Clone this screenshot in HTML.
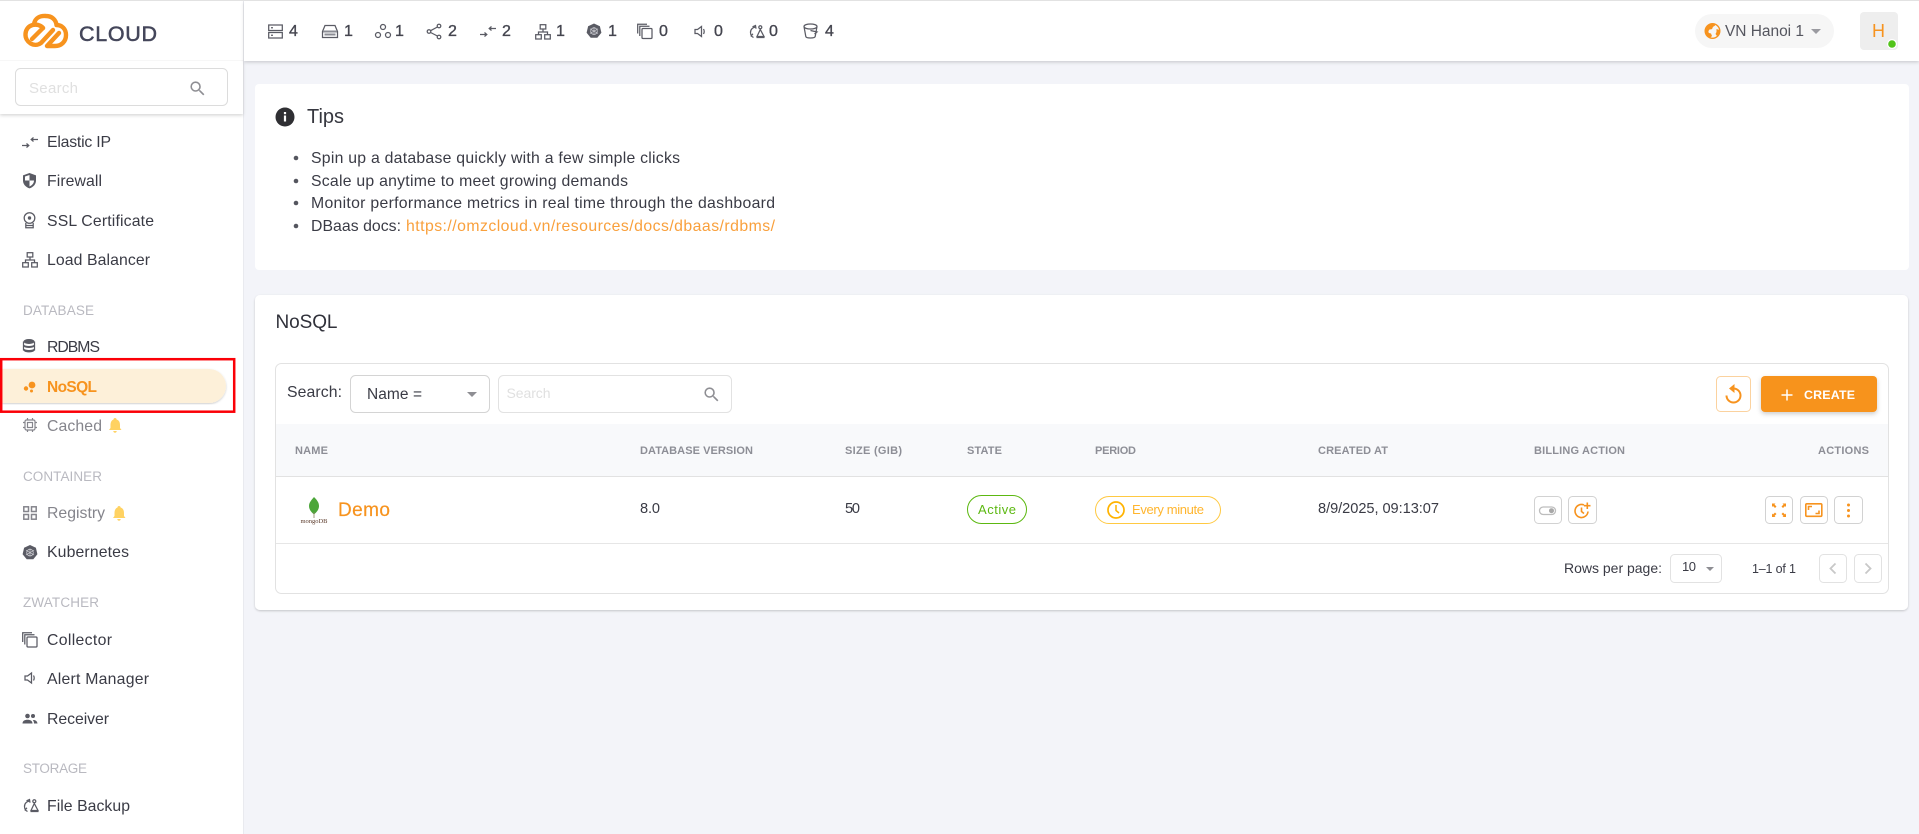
<!DOCTYPE html>
<html><head><meta charset="utf-8"><title>NoSQL</title>
<style>
html,body{margin:0;padding:0;width:1919px;height:834px;overflow:hidden;background:#f3f4f9}
svg{display:block}
text{font-family:"Liberation Sans",sans-serif;white-space:pre}
.n{font-size:15.8px;fill:#3a3b45}
.d{font-size:15.8px;fill:#85858c}
.s{font-size:13.5px;fill:#b9b9c0}
.c{font-size:16px;fill:#44454f;stroke:#44454f;stroke-width:.35}
.t{font-size:15.8px;fill:#3a3b45}
.td{font-size:14.6px;fill:#3a3b45}
.o{fill:#f7931e}
.h{font-size:11px;font-weight:bold;fill:#8d8e96}
.b{fill:#fff;stroke:#d2d2d2;stroke-width:1}
.ic{fill:none;stroke:#5a5b64;stroke-width:1.25}
.if{fill:#5a5b64}
.oi{fill:none;stroke:#f7931e;stroke-width:1.6}
</style></head><body>
<svg width="1919" height="834" viewBox="0 0 1919 834" xmlns="http://www.w3.org/2000/svg">
<defs>
<filter id="sh" x="-5%" y="-30%" width="110%" height="170%"><feDropShadow dx="0" dy="1.500" stdDeviation="1.500" flood-color="#000" flood-opacity=".16"/></filter>
<filter id="sh2" x="-3%" y="-3%" width="106%" height="106%"><feDropShadow dx="0" dy="1" stdDeviation="1" flood-color="#000" flood-opacity=".2"/></filter>
<filter id="sh3" x="-20%" y="-30%" width="140%" height="180%"><feDropShadow dx="0" dy="2" stdDeviation="2.500" flood-color="#000" flood-opacity=".2"/></filter>
<path id="mag" d="M9.5,3A6.5,6.5 0 0,1 16,9.5C16,11.11 15.41,12.59 14.44,13.73L14.71,14H15.5L20.5,19L19,20.5L14,15.5V14.71L13.73,14.44C12.59,15.41 11.11,16 9.5,16A6.5,6.5 0 0,1 3,9.5A6.5,6.5 0 0,1 9.5,3M9.5,5C7,5 5,7 5,9.5C5,12 7,14 9.5,14C12,14 14,12 14,9.5C14,7 12,5 9.5,5Z"/>
<path id="bell" d="M6 0c1 0 1.600.7 1.600 1.500C10 2.200 11 4.300 11 7v3l1.500 2H0l1.500-2V7c0-2.700 1-4.800 3-5.500C4.500.7 5 0 6 0zM4.300 13h3.400c0 1-.7 1.800-1.700 1.800S4.300 14 4.300 13z"/>
<g id="i-ip" class="ic"><path d="M0 10.500h6.500M4.500 8.500l2.300 2-2.300 2M16 4.500H9.500M11.500 2.500L9.200 4.500l2.300 2" fill="none"/></g>
<g id="i-lb" class="ic"><rect x="5.200" y=".7" width="5.600" height="4.300"/><rect x=".7" y="10.700" width="5.600" height="4.300"/><rect x="9.700" y="10.700" width="5.600" height="4.300"/><path d="M8 5v3M3.500 10.700V8h9v2.700"/></g>
<g id="i-copy" class="ic"><rect x="5" y="5" width="10" height="10" rx="1"/><path d="M2.800 12.500V2.800h9.700M.7 10V.7H10"/></g>
<g id="i-sp" class="ic"><path d="M1 5h2.500L7.500 2v10L3.500 9H1z"/><path d="M9.500 4.500c.8 1.400.8 3.600 0 5"/></g>
<g id="i-bk" class="ic"><path d="M6.500 3C3.500 3.500 1.500 5.500 1.500 8.500c0 1.300.3 2.300 1 3.200M4.500 13.500l-2.300-1.500 1.700-2.300M3.500 2.800L6.500 1.500 7 4.700"/><circle cx="11.300" cy="3.300" r="1.500"/><path d="M11.300 5.500L8 12.500h7zM7.500 13.500h8"/></g>
<g id="i-k8s"><path class="if" d="M8 0l5.900 2.800 1.500 6.400-4.100 5.100H4.700L.6 9.200l1.500-6.400z"/><circle cx="8" cy="7.600" r="3.300" fill="none" stroke="#c9c9cf" stroke-width=".8"/><path d="M8 3.500v8M4 5.300l8 4.600M12 5.300l-8 4.600" stroke="#c9c9cf" stroke-width=".7"/></g>
</defs>

<rect width="1919" height="834" fill="#f3f4f9"/>
<!-- sidebar -->
<rect x="0" y="0" width="243" height="834" fill="#fff"/>
<rect x="243" y="0" width="1" height="834" fill="#e9eaef"/>
<rect x="0" y="60" width="243" height="54" fill="#fff" filter="url(#sh)"/>
<rect x="0" y="0" width="243" height="60" fill="#fff"/>
<rect x="0" y="60" width="243" height="1" fill="#f7f7f7"/>
<!-- logo -->
<g fill="none" stroke="#f7931e" stroke-width="4.400" stroke-linecap="round" stroke-linejoin="round">
<path d="M43 28C38 22 26 24 25.500 34C25 42 34 48 41 43L53 30"/>
<path d="M34 24C35 18 40 15.500 46 16C52 16 56 20 56.500 25C62 25 66 29 66 35C66 42 61 46 55 46H47L59 33"/>
<path d="M32 39L43 28"/>
</g>
<text x="79" y="41" font-size="21.500" textLength="78" style="fill:#44465a;stroke:#44465a;stroke-width:.5">CLOUD</text>
<!-- sidebar search -->
<rect x="15.500" y="68.500" width="212" height="37" rx="5" fill="#fff" stroke="#dcdcdc"/>
<text x="29" y="93" font-size="15" textLength="49" fill="#e0e0e0">Search</text>
<use href="#mag" transform="translate(188,79) scale(.8)" fill="#8e8e93"/>

<!-- nav -->
<use href="#i-ip" x="22" y="135"/>
<text class="n" x="47" y="147" textLength="64">Elastic IP</text>
<path class="if" d="M29.500 173l6.500 2.400v5.100c0 3.700-2.600 6.600-6.500 7.900-3.900-1.300-6.500-4.200-6.500-7.900v-5.100z"/>
<path d="M29.500 175v5.500H25v-4zM29.500 180.500H34c0 2.800-2 4.900-4.500 6z" fill="#fff"/>
<text class="n" x="47" y="186" textLength="55">Firewall</text>
<circle cx="29.500" cy="218" r="5.300" class="ic"/><circle cx="29.500" cy="218" r="1.700" class="if"/><path class="ic" d="M25.800 223v4.800h7.400V223M25.800 225.500h7.400"/>
<text class="n" x="47" y="226" textLength="107">SSL Certificate</text>
<use href="#i-lb" transform="translate(22,252)"/>
<text class="n" x="47" y="265" textLength="103">Load Balancer</text>

<text class="s" x="23" y="315" textLength="71">DATABASE</text>
<ellipse cx="29" cy="341.500" rx="5.500" ry="2.500" class="if"/><path d="M23.500 344.500c2 2 9 2 11 0v2c-2 2-9 2-11 0zM23.500 348.500c2 2 9 2 11 0v2c-.5 2-9 3-11 0z" class="if"/><path d="M23.500 341.500v9M34.500 341.500v9" class="ic"/>
<text class="n" x="47" y="352" textLength="53">RDBMS</text>

<path d="M2 369H209a17 17 0 0 1 0 34H2z" fill="#fdf0d9" filter="url(#sh2)"/>
<circle cx="32" cy="385" r="3.400" fill="#f7931e"/><circle cx="26" cy="388.500" r="2.200" fill="#f7931e"/><circle cx="31.500" cy="391" r="1.500" fill="#f7931e"/>
<text x="47" y="392" font-size="15.500" font-weight="bold" fill="#f7931e" textLength="50">NoSQL</text>
<rect x="1.200" y="359.200" width="233" height="52.500" fill="none" stroke="#fb0007" stroke-width="2.500"/>

<g fill="none" stroke="#85858c" stroke-width="1.200"><rect x="25" y="420" width="10" height="10" rx="1.500"/><rect x="27.500" y="422.500" width="5" height="5"/><path d="M27.500 418v2M32.500 418v2M27.500 430v2M32.500 430v2M23 422.500h2M23 427.500h2M35 422.500h2M35 427.500h2"/></g>
<text class="d" x="47" y="431" textLength="55">Cached</text>
<use href="#bell" transform="translate(109,418)" fill="#ffd262"/>

<text class="s" x="23" y="481" textLength="79">CONTAINER</text>
<g fill="none" stroke="#85858c" stroke-width="1.500"><rect x="23.800" y="506.800" width="4.700" height="4.700"/><rect x="31.500" y="506.800" width="4.700" height="4.700"/><rect x="23.800" y="514.500" width="4.700" height="4.700"/><rect x="31.500" y="514.500" width="4.700" height="4.700"/></g>
<text class="d" x="47" y="518" textLength="58">Registry</text>
<use href="#bell" transform="translate(113,506)" fill="#ffd262"/>
<use href="#i-k8s" transform="translate(22,545)"/>
<text class="n" x="47" y="557" textLength="82">Kubernetes</text>

<text class="s" x="23" y="607" textLength="76">ZWATCHER</text>
<use href="#i-copy" transform="translate(22,632)"/>
<text class="n" x="47" y="645" textLength="65">Collector</text>
<use href="#i-sp" transform="translate(24,671)"/>
<text class="n" x="47" y="684" textLength="102">Alert Manager</text>
<g class="if"><circle cx="27.500" cy="716" r="2.300"/><circle cx="33" cy="716" r="2"/><path d="M22.500 723.500c0-2.500 2.200-3.700 5-3.700s5 1.200 5 3.700zM34 723.500c0-1.300-.4-2.500-1.200-3.500 2.300-.3 4.400.9 4.700 3.500z"/></g>
<text class="n" x="47" y="724" textLength="62">Receiver</text>

<text class="s" x="23" y="773" textLength="64">STORAGE</text>
<use href="#i-bk" transform="translate(23,798)"/>
<text class="n" x="47" y="811" textLength="83">File Backup</text>

<!-- header -->
<rect x="244" y="1" width="1675" height="60" fill="#fff" filter="url(#sh)"/>
<rect x="0" y="0" width="1919" height="1" fill="#e2e2e2"/>
<g class="ic"><rect x="268.700" y="25" width="13.600" height="5.500"/><rect x="268.700" y="32.500" width="13.600" height="5.500"/><path d="M271 27.800h2M271 35.300h2"/></g>
<text class="c" x="289" y="36" textLength="9">4</text>
<g class="ic"><path d="M325 25.500h10l2.500 6v6h-15v-6z"/><path d="M323 31.500h14M324.500 34.500h11" stroke="#8b8c94" stroke-width="2"/></g>
<text class="c" x="344" y="36" textLength="8">1</text>
<g class="ic"><circle cx="383" cy="27" r="2.500"/><circle cx="378" cy="35" r="2.500"/><circle cx="388" cy="35" r="2.500"/></g>
<text class="c" x="395" y="36" textLength="8">1</text>
<g class="ic"><circle cx="439" cy="26" r="1.800"/><circle cx="429" cy="31.500" r="1.800"/><circle cx="439" cy="37" r="1.800"/><path d="M437.400 27l-6.800 3.700M430.600 32.500l6.800 3.500"/></g>
<text class="c" x="448" y="36" textLength="9">2</text>
<use href="#i-ip" transform="translate(480,24)"/>
<text class="c" x="502" y="36" textLength="9">2</text>
<use href="#i-lb" transform="translate(535,24)"/>
<text class="c" x="556" y="36" textLength="8">1</text>
<use href="#i-k8s" transform="translate(586,23.500)"/>
<text class="c" x="608" y="36" textLength="8">1</text>
<use href="#i-copy" transform="translate(637,23.500)"/>
<text class="c" x="659" y="36" textLength="9">0</text>
<use href="#i-sp" transform="translate(694,24.500)"/>
<text class="c" x="714" y="36" textLength="9">0</text>
<use href="#i-bk" transform="translate(749,24)"/>
<text class="c" x="769" y="36" textLength="9">0</text>
<g class="ic"><path d="M804 26.500c0-3.300 13-3.300 13 0s-13 3.300-13 0zM804 26.500l1.800 10c.3 2 9 2 9.400 0l1.800-10M810.500 30.500l6.500 1.500-2.500 2"/></g>
<text class="c" x="825" y="36" textLength="9">4</text>

<rect x="1695" y="14" width="139" height="34" rx="17" fill="#f6f6f6"/>
<circle cx="1712.500" cy="31" r="7.300" fill="none" stroke="#f7931e" stroke-width="1.400"/><path d="M1706 29c1-3 3.500-5 6.500-5.500l3 1c-.5 2-2.500 1.500-3 3.500s-1.500 1-3 1.500c-1 1-1.500 2.500-.5 3.500l2 .5 1 2.500-2 2c-2.500-1-4-3.500-4.500-6zM1716.500 29l3 1c.3 2.500-.8 4.500-2.500 6l-1.500-2 1-2z" fill="#f7931e"/>
<text x="1725" y="36" font-size="15.500" fill="#55565f" textLength="79">VN Hanoi 1</text>
<path d="M1811 29h10l-5 5z" fill="#9a9aa0"/>
<rect x="1860" y="12" width="38" height="38" rx="4" fill="#eeeeee"/>
<text x="1872" y="37" font-size="18" fill="#f7931e" textLength="13">H</text>
<circle cx="1892" cy="44" r="5" fill="#fff"/><circle cx="1892" cy="44" r="3.800" fill="#52c41a"/>

<!-- tips card -->
<rect x="255" y="84" width="1654" height="186" rx="4" fill="#fff"/>
<circle cx="285" cy="117" r="9.500" fill="#2f2f33"/><rect x="283.900" y="115.500" width="2.200" height="6" fill="#fff"/><rect x="283.900" y="112" width="2.200" height="2.200" fill="#fff"/>
<text x="307" y="123" font-size="20" fill="#36373f" textLength="37">Tips</text>
<circle cx="296" cy="158" r="2.300" fill="#55565f"/><text class="t" x="311" y="163" textLength="369">Spin up a database quickly with a few simple clicks</text>
<circle cx="296" cy="181" r="2.300" fill="#55565f"/><text class="t" x="311" y="186" textLength="317">Scale up anytime to meet growing demands</text>
<circle cx="296" cy="203" r="2.300" fill="#55565f"/><text class="t" x="311" y="208" textLength="464">Monitor performance metrics in real time through the dashboard</text>
<circle cx="296" cy="226" r="2.300" fill="#55565f"/><text class="t" x="311" y="231" textLength="90">DBaas docs:</text><text class="t" x="406" y="231" textLength="369" style="fill:#f9a03c">https://omzcloud.vn/resources/docs/dbaas/rdbms/</text>

<!-- nosql card -->
<rect x="255" y="295" width="1653" height="315" rx="5" fill="#fff" filter="url(#sh2)"/>
<text x="275.500" y="328" font-size="19" fill="#30313a" textLength="62">NoSQL</text>
<rect x="275.500" y="363.500" width="1613" height="230" rx="6" fill="#fff" stroke="#e2e2e2"/>
<text class="t" x="287" y="397" textLength="55">Search:</text>
<rect x="350.500" y="375.500" width="139" height="37" rx="5" fill="#fff" stroke="#d4d4d4"/>
<text x="367" y="399" font-size="15.500" fill="#3a3b45" textLength="55">Name =</text>
<path d="M467 392h10l-5 5z" fill="#8e8e93"/>
<rect x="498.500" y="375.500" width="233" height="37" rx="5" fill="#fff" stroke="#e2e2e2"/>
<text x="506.500" y="398" font-size="14" fill="#e0e0e0" textLength="44">Search</text>
<use href="#mag" transform="translate(702,385) scale(.8)" fill="#8e8e93"/>
<rect x="1716.500" y="376.500" width="34" height="35" rx="4" fill="#fff" stroke="#fbd29f"/>
<path d="M1733.500 388.500a7 7 0 1 1-7 7" fill="none" stroke="#f7931e" stroke-width="2"/><path d="M1734.500 384l-5.500 4.500 5.500 4.500z" fill="#f7931e"/>
<rect x="1761" y="376" width="116" height="36" rx="4" fill="#f7931e" filter="url(#sh3)"/>
<path d="M1781.500 395h11M1787 389.500v11" stroke="#fff" stroke-width="1.500"/>
<text x="1804" y="399" font-size="12.400" font-weight="bold" fill="#fff" textLength="51">CREATE</text>

<!-- table head -->
<rect x="276" y="424" width="1612" height="52" fill="#f8f9fb"/>
<rect x="276" y="476" width="1612" height="1" fill="#e2e2e2"/>
<rect x="276" y="543" width="1612" height="1" fill="#e6e6e6"/>
<text class="h" x="295" y="454" textLength="33">NAME</text>
<text class="h" x="640" y="454" textLength="113">DATABASE VERSION</text>
<text class="h" x="845" y="454" textLength="57">SIZE (GIB)</text>
<text class="h" x="967" y="454" textLength="35">STATE</text>
<text class="h" x="1095" y="454" textLength="41">PERIOD</text>
<text class="h" x="1318" y="454" textLength="70">CREATED AT</text>
<text class="h" x="1534" y="454" textLength="91">BILLING ACTION</text>
<text class="h" x="1818" y="454" textLength="51">ACTIONS</text>

<!-- row -->
<path d="M314 497c3 3 5 5.500 5 9 0 4-3 6.500-4.500 8h-1C312 512.500 309 510 309 506c0-3.500 2.500-6 5-9z" fill="#4ca63a"/>
<path d="M314 512v6" stroke="#8a7f60" stroke-width=".8"/>
<text x="300.500" y="523" textLength="27" style="font-family:'Liberation Serif',serif;font-size:6.500px;fill:#5b3a2a">mongoDB</text>
<text x="338" y="516" font-size="19" fill="#f7931e" stroke="#f7931e" stroke-width=".2" textLength="52">Demo</text>
<text class="td" x="640" y="513" textLength="20">8.0</text>
<text class="td" x="845" y="513" textLength="15">50</text>
<rect x="967.500" y="495.500" width="59" height="28" rx="14" fill="#fff" stroke="#5cb811"/>
<text x="978" y="514" font-size="13" fill="#5cb811" textLength="38">Active</text>
<rect x="1095.500" y="496.500" width="125" height="27" rx="13.500" fill="#fff" stroke="#ffc942"/>
<circle cx="1116" cy="510" r="8" fill="none" stroke="#ffb300" stroke-width="1.700"/><path d="M1116 505v5.500l3 2.500" fill="none" stroke="#ffb300" stroke-width="1.500"/>
<text x="1132" y="514" font-size="13" fill="#ffb52e" textLength="72">Every minute</text>
<text class="td" x="1318" y="513" textLength="121">8/9/2025, 09:13:07</text>

<rect class="b" x="1534.500" y="496.500" width="27" height="27" rx="4"/>
<rect x="1539.500" y="507" width="16" height="7.500" rx="3.700" fill="#fff" stroke="#bdbdbd" stroke-width="1.300"/><circle cx="1551.500" cy="510.700" r="2.500" fill="#a8a8a8"/>
<rect class="b" x="1568.500" y="496.500" width="28" height="27" rx="4"/>
<path d="M1584 505a6.500 6.500 0 1 0 4 6.500" class="oi" stroke-width="1.800"/><path d="M1581.500 507.500v4l2.500 2M1584 505.700h6.500M1587.300 502.500v6.500" class="oi" stroke-width="1.500"/>
<rect class="b" x="1765.500" y="496.500" width="27" height="27" rx="4"/>
<path d="M1772 503.500h3.500l-1 1 2 2-1.500 1.500-2-2-1 1zM1786 503.500h-3.500l1 1-2 2 1.500 1.500 2-2 1 1zM1772 517h3.500l-1-1 2-2-1.500-1.500-2 2-1-1zM1786 517h-3.500l1-1-2-2 1.500-1.500 2 2 1-1z" fill="#f7931e"/>
<rect class="b" x="1800.500" y="496.500" width="27" height="27" rx="4"/>
<rect x="1805.800" y="503.800" width="16" height="12.500" rx="1" class="oi"/><path d="M1808.500 510v-3.500h3.500M1819 510.500v3h-3.500" class="oi" stroke-width="1.300"/>
<rect class="b" x="1834.500" y="496.500" width="28" height="27" rx="4"/>
<circle cx="1848.500" cy="505" r="1.500" fill="#f7931e"/><circle cx="1848.500" cy="510.500" r="1.500" fill="#f7931e"/><circle cx="1848.500" cy="516" r="1.500" fill="#f7931e"/>

<!-- footer -->
<text class="td" x="1564" y="573" style="font-size:14px" textLength="98">Rows per page:</text>
<rect x="1670.500" y="554.500" width="51" height="28" rx="4" fill="#fff" stroke="#e2e2e2"/>
<text class="td" x="1682" y="571" style="font-size:13px" textLength="14">10</text>
<path d="M1706 567h8l-4 4z" fill="#8e8e93"/>
<text class="td" x="1752" y="573" style="font-size:12.500px" textLength="44">1–1 of 1</text>
<rect x="1819.500" y="554.500" width="27" height="28" rx="4" fill="#fff" stroke="#e2e2e2"/>
<path d="M1835.500 563.500l-5 5 5 5" fill="none" stroke="#c8c8c8" stroke-width="1.800"/>
<rect x="1854.500" y="554.500" width="27" height="28" rx="4" fill="#fff" stroke="#e2e2e2"/>
<path d="M1865.500 563.500l5 5-5 5" fill="none" stroke="#c8c8c8" stroke-width="1.800"/>
</svg>
</body></html>
